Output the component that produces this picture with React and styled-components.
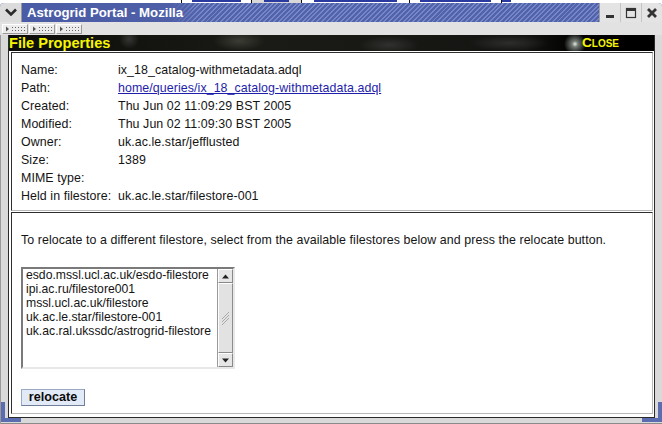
import React from "react";
import styled, { createGlobalStyle } from "styled-components";

const GlobalStyle = createGlobalStyle`
  html, body {
    margin: 0;
    padding: 0;
    width: 662px;
    height: 424px;
    overflow: hidden;
    background: #ffffff;
  }
  body {
    font-family: "Liberation Sans", Arial, sans-serif;
  }
`;

const Desktop = styled.div`
  width: 662px;
  height: 424px;
  display: flex;
  flex-direction: column;
  overflow: hidden;
`;

/* the bottom sliver of the browser window that sits behind the dialog */
const BehindStrip = styled.div`
  height: 3px;
  display: flex;
  overflow: hidden;
  background: #ffffff;
  padding-left: 181px;
`;

const BehindTab = styled.div`
  width: ${(p) => p.$w}px;
  height: 3px;
  box-sizing: border-box;
  border-left: 1px solid #111;
  padding: 0 ${(p) => p.$pad}px;
  background: ${(p) => (p.$active ? "#d8d8d8" : "#ffffff")};

  &::after {
    content: "";
    display: block;
    height: 2px;
    background: #2a3aa0;
  }
`;

const Window = styled.div`
  flex: 1;
  display: flex;
  flex-direction: column;
  background: #d9d9d9;
  border-radius: 4px 4px 0 0;
  overflow: hidden;
`;

const TitleBar = styled.div`
  height: 19px;
  display: flex;
  align-items: stretch;
  background: repeating-linear-gradient(
    135deg,
    #5163ab 0px,
    #5163ab 2px,
    #7686c6 2px,
    #7686c6 3.4px
  );
`;

const MenuButton = styled.div`
  width: 21px;
  display: flex;
  align-items: center;
  justify-content: center;
  background: #dcdcdc;
  border-radius: 4px 0 0 0;
  border-right: 1px solid #9a9a9a;
`;

const TitleText = styled.div`
  display: flex;
  align-items: center;
  padding: 0 14px 0 5px;
  background: linear-gradient(90deg, #4b5ca6 0%, #4e5fa8 85%, rgba(78, 95, 168, 0) 100%);
  color: #ffffff;
  font-weight: bold;
  font-size: 13.2px;
  white-space: nowrap;
`;

const TitleFill = styled.div`
  flex: 1;
`;

const WindowButtons = styled.div`
  display: flex;
  background: #e4e4e4;
  border-left: 1px solid #a0a0a0;
`;

const WinButton = styled.div`
  width: 20px;
  display: flex;
  align-items: center;
  justify-content: center;
  border-right: 1px solid #c4c4c4;
  &:last-child {
    border-right: 0;
  }
`;

const Toolbar = styled.div`
  height: 13px;
  display: flex;
  align-items: center;
  gap: 1px;
  padding-left: 2px;
  background: #e2e2e2;
`;

const Grip = styled.div`
  width: 26px;
  height: 10px;
  display: flex;
  align-items: center;
  background: #ececec;
  border: 1px solid;
  border-color: #ffffff #9a9a9a #9a9a9a #ffffff;
  box-sizing: border-box;
`;

const FrameBody = styled.div`
  flex: 1;
  position: relative;
  display: flex;
  padding: 0 7px 6px 7px;
  border-left: 1px solid #9a9a9a;
  background: #d9d9d9;

  &::before,
  &::after {
    content: "";
    position: absolute;
    bottom: 2px;
    width: 20px;
    height: 4px;
    background: #5c6cb0;
  }
  &::before {
    left: 0;
  }
  &::after {
    right: 0;
  }
`;

const CornerBar = styled.div`
  position: absolute;
  ${(p) => (p.$side === "left" ? "left: 0;" : "right: 0;")}
  bottom: 2px;
  width: 4px;
  height: 20px;
  background: #5c6cb0;
`;

const BottomEdge = styled.div`
  position: absolute;
  left: 0;
  right: 0;
  bottom: 0;
  height: 1px;
  background: #8a8a8a;
`;

const Content = styled.div`
  flex: 1;
  display: flex;
  flex-direction: column;
  border: 1px solid #2a2a2a;
  border-top: 0;
  background: #ffffff;
`;

const Banner = styled.div`
  height: 16px;
  display: flex;
  align-items: center;
  justify-content: space-between;
  background:
    radial-gradient(circle at 566px 9px, rgba(240, 245, 240, 0.95) 0px, rgba(190, 200, 190, 0.6) 3px, rgba(60, 70, 60, 0) 11px),
    radial-gradient(ellipse 26px 10px at 230px 6px, rgba(90, 90, 80, 0.55), rgba(0, 0, 0, 0)),
    radial-gradient(ellipse 30px 9px at 380px 10px, rgba(80, 80, 80, 0.45), rgba(0, 0, 0, 0)),
    radial-gradient(ellipse 40px 8px at 500px 8px, rgba(70, 70, 70, 0.5), rgba(0, 0, 0, 0)),
    radial-gradient(circle at 120px 4px, rgba(120, 120, 120, 0.35), rgba(0, 0, 0, 0) 10px),
    linear-gradient(90deg, #0c0c0a 0%, #1a1a16 40%, #141412 80%, #000 88%, #000 100%);
`;

const BannerTitle = styled.div`
  color: #f6f600;
  font-weight: bold;
  font-size: 14.6px;
  line-height: 16px;
  white-space: nowrap;
`;

const CloseLink = styled.div`
  color: #f6f600;
  font-weight: bold;
  font-size: 13.6px;
  font-variant: small-caps;
  line-height: 16px;
  margin-right: 35px;
  cursor: pointer;
`;

const Panels = styled.div`
  flex: 1;
  display: flex;
  flex-direction: column;
  gap: 1px;
  padding: 1px 1px 3px 2px;
`;

const Panel = styled.div`
  flex: ${(p) => (p.$grow ? 1 : "none")};
  border: 1px solid;
  border-color: #2e2e2e #b8b8b8 #b8b8b8 #2e2e2e;
  padding: ${(p) => (p.$grow ? "20px 9px 0 9px" : "9px 9px 5px 9px")};
  font-size: 12.4px;
  letter-spacing: 0.08px;
  color: #141414;
`;

const PropGrid = styled.div`
  display: grid;
  grid-template-columns: 97px 1fr;
  grid-auto-rows: 17.9px;
  align-items: center;
  line-height: 15px;
`;

const Label = styled.div`
  white-space: nowrap;
`;

const Value = styled.div`
  white-space: nowrap;
`;

const PathLink = styled.a`
  color: #1e1eaa;
  text-decoration: underline;
`;

const Intro = styled.p`
  margin: 0;
  line-height: 15px;
  white-space: nowrap;
`;

const ListBox = styled.div`
  margin-top: 19px;
  width: 214px;
  height: 102px;
  box-sizing: border-box;
  display: flex;
  border: 2px solid;
  border-color: #7a7a7a #e8e8e8 #e8e8e8 #7a7a7a;
  background: #ffffff;
`;

const Options = styled.div`
  flex: 1;
  padding-left: 3px;
  font-size: 12.2px;
  letter-spacing: 0;
  line-height: 13.9px;
  white-space: nowrap;
  overflow: hidden;
`;

const ScrollBar = styled.div`
  width: 15px;
  display: flex;
  flex-direction: column;
  background: #d6d6d6;
  border-left: 1px solid #9a9a9a;
`;

const ScrollButton = styled.div`
  height: 14px;
  display: flex;
  align-items: center;
  justify-content: center;
  box-sizing: border-box;
  background: #e6e6e6;
  border: 1px solid;
  border-color: #ffffff #888 #888 #ffffff;
`;

const ScrollThumb = styled.div`
  flex: 1;
  display: flex;
  align-items: center;
  justify-content: center;
  box-sizing: border-box;
  background: #e2e2e2;
  border: 1px solid;
  border-color: #ffffff #8c8c8c #8c8c8c #ffffff;
`;

const RelocateButton = styled.button`
  margin-top: 20px;
  width: 64px;
  height: 17px;
  padding: 0;
  display: block;
  background: #e2eaf8;
  border: 1px solid;
  border-color: #9aa8c0 #6f7f99 #6f7f99 #9aa8c0;
  font-family: "Liberation Sans", Arial, sans-serif;
  font-weight: bold;
  font-size: 12.6px;
  line-height: 15px;
  color: #0a0a0a;
`;

function GripIcon() {
  return (
    <svg width="24" height="8" viewBox="0 0 24 8">
      <path d="M3 1.5 L6 4 L3 6.5 Z" fill="#555" />
      {[9, 12, 15, 18, 21].map((x) =>
        [2, 5].map((y) => (
          <rect key={`${x}-${y}`} x={x} y={y} width="1" height="1" fill="#666" />
        ))
      )}
    </svg>
  );
}

const properties = [
  ["Name:", "ix_18_catalog-withmetadata.adql"],
  ["Path:", "home/queries/ix_18_catalog-withmetadata.adql", true],
  ["Created:", "Thu Jun 02 11:09:29 BST 2005"],
  ["Modified:", "Thu Jun 02 11:09:30 BST 2005"],
  ["Owner:", "uk.ac.le.star/jefflusted"],
  ["Size:", "1389"],
  ["MIME type:", ""],
  ["Held in filestore:", "uk.ac.le.star/filestore-001"],
];

const filestores = [
  "esdo.mssl.ucl.ac.uk/esdo-filestore",
  "ipi.ac.ru/filestore001",
  "mssl.ucl.ac.uk/filestore",
  "uk.ac.le.star/filestore-001",
  "uk.ac.ral.ukssdc/astrogrid-filestore",
];

export default function App() {
  return (
    <Desktop>
      <GlobalStyle />
      <BehindStrip>
        <BehindTab $w={70} $pad={10} />
        <BehindTab $w={50} $pad={12} $active />
        <BehindTab $w={108} $pad={12} />
        <BehindTab $w={92} $pad={10} />
        <BehindTab $w={10} $pad={0} />
      </BehindStrip>

      <Window>
        <TitleBar>
          <MenuButton>
            <svg width="12" height="9" viewBox="0 0 12 9">
              <path d="M1 1.5 L6 6.5 L11 1.5" fill="none" stroke="#2a2a2a" strokeWidth="2.6" />
            </svg>
          </MenuButton>
          <TitleText>Astrogrid Portal - Mozilla</TitleText>
          <TitleFill />
          <WindowButtons>
            <WinButton>
              <svg width="12" height="12" viewBox="0 0 12 12">
                <rect x="2" y="8" width="8" height="3" fill="#333" />
              </svg>
            </WinButton>
            <WinButton>
              <svg width="12" height="12" viewBox="0 0 12 12">
                <rect x="1.5" y="1.5" width="9" height="9" fill="none" stroke="#333" strokeWidth="1.2" />
                <rect x="1" y="1" width="10" height="3" fill="#333" />
              </svg>
            </WinButton>
            <WinButton>
              <svg width="12" height="12" viewBox="0 0 12 12">
                <path d="M2 2 L10 10 M10 2 L2 10" stroke="#333" strokeWidth="2.8" />
              </svg>
            </WinButton>
          </WindowButtons>
        </TitleBar>

        <Toolbar>
          <Grip>
            <GripIcon />
          </Grip>
          <Grip>
            <GripIcon />
          </Grip>
          <Grip>
            <GripIcon />
          </Grip>
        </Toolbar>

        <FrameBody>
          <CornerBar $side="left" />
          <CornerBar $side="right" />
          <BottomEdge />
          <Content>
            <Banner>
              <BannerTitle>File Properties</BannerTitle>
              <CloseLink>Close</CloseLink>
            </Banner>
            <Panels>
              <Panel>
                <PropGrid>
                  {properties.map(([label, value, link]) => (
                    <React.Fragment key={label}>
                      <Label>{label}</Label>
                      <Value>{link ? <PathLink href="#">{value}</PathLink> : value}</Value>
                    </React.Fragment>
                  ))}
                </PropGrid>
              </Panel>
              <Panel $grow>
                <Intro>
                  To relocate to a different filestore, select from the available filestores below and
                  press the relocate button.
                </Intro>
                <ListBox>
                  <Options>
                    {filestores.map((f) => (
                      <div key={f}>{f}</div>
                    ))}
                  </Options>
                  <ScrollBar>
                    <ScrollButton>
                      <svg width="7" height="5" viewBox="0 0 7 5">
                        <path d="M0 4.5 L3.5 0.5 L7 4.5 Z" fill="#222" />
                      </svg>
                    </ScrollButton>
                    <ScrollThumb>
                      <svg width="9" height="14" viewBox="0 0 9 14">
                        <path d="M1 8 L8 1 M1 11 L8 4 M1 14 L8 7" stroke="#aaa" strokeWidth="1" />
                      </svg>
                    </ScrollThumb>
                    <ScrollButton>
                      <svg width="7" height="5" viewBox="0 0 7 5">
                        <path d="M0 0.5 L3.5 4.5 L7 0.5 Z" fill="#222" />
                      </svg>
                    </ScrollButton>
                  </ScrollBar>
                </ListBox>
                <RelocateButton>relocate</RelocateButton>
              </Panel>
            </Panels>
          </Content>
        </FrameBody>
      </Window>
    </Desktop>
  );
}
